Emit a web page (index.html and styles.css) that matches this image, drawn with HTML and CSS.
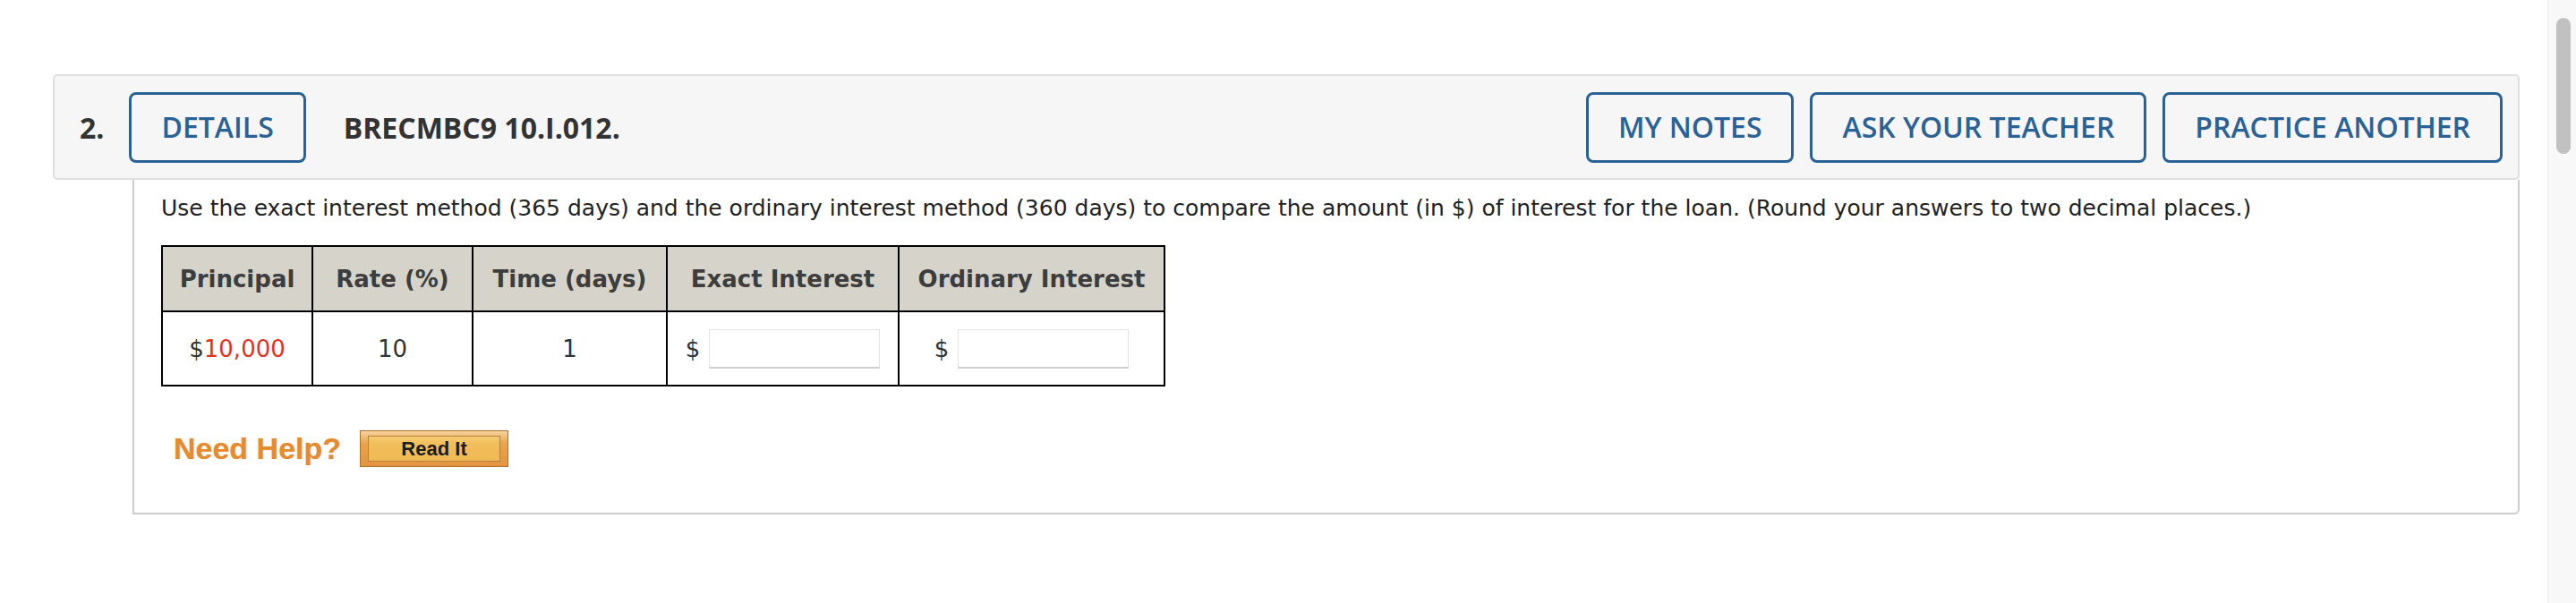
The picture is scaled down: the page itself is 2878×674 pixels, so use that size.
FILE: index.html
```html
<!DOCTYPE html>
<html lang="en">
<head>
<meta charset="utf-8">
<title>Question 2</title>
<link rel="stylesheet" href="styles.css">
</head>
<body>
<div class="page">
  <main class="main">
    <section class="question">
      <header class="q-head">
        <span class="q-num">2.</span>
        <button class="btn btn-details" type="button">DETAILS</button>
        <span class="q-code">BRECMBC9 10.I.012.</span>
        <div class="q-actions">
          <button class="btn" type="button">MY NOTES</button>
          <button class="btn" type="button">ASK YOUR TEACHER</button>
          <button class="btn" type="button">PRACTICE ANOTHER</button>
        </div>
      </header>
      <div class="q-body">
        <p class="prompt">Use the exact interest method (365 days) and the ordinary interest method (360 days) to compare the amount (in $) of interest for the loan. (Round your answers to two decimal places.)</p>
        <table class="grid">
          <colgroup>
            <col class="c1"><col class="c2"><col class="c3"><col class="c4"><col class="c5">
          </colgroup>
          <thead>
            <tr>
              <th>Principal</th>
              <th>Rate (%)</th>
              <th>Time (days)</th>
              <th>Exact Interest</th>
              <th>Ordinary Interest</th>
            </tr>
          </thead>
          <tbody>
            <tr>
              <td>$<span class="given">10,000</span></td>
              <td>10</td>
              <td>1</td>
              <td><span class="ans">$<input type="text" aria-label="Exact interest"></span></td>
              <td><span class="ans">$<input type="text" aria-label="Ordinary interest"></span></td>
            </tr>
          </tbody>
        </table>
        <div class="help">
          <span class="need">Need Help?</span>
          <span class="readit"><span class="readit-inner">Read It</span></span>
        </div>
      </div>
    </section>
  </main>
  <div class="scrollbar"><div class="thumb"></div></div>
</div>
</body>
</html>
```

FILE: styles.css
```css
* { box-sizing: border-box; }

html, body {
  margin: 0;
  padding: 0;
  overflow: hidden;
  background: #fff;
}

.page {
  display: flex;
  height: 674px;
}

.main {
  flex: 1;
  padding: 83px 31px 0 59px;
}

/* ---------- header bar ---------- */
.q-head {
  display: flex;
  align-items: center;
  height: 118px;
  padding: 0 17px 0 28px;
  background: #f6f6f6;
  border: 2px solid #dfdfdf;
  border-radius: 5px;
  font-family: "Open Sans", "DejaVu Sans", sans-serif;
}

.q-num {
  font-size: 32px;
  font-weight: 700;
  color: #333;
}

.btn {
  font-family: inherit;
  font-size: 32px;
  font-weight: 600;
  line-height: 1;
  color: #2b6296;
  background: transparent;
  border: 3px solid #2b6296;
  border-radius: 8px;
  height: 79px;
  padding: 0 33px;
  margin: 0;
}

.btn-details { margin-left: 28px; }

.q-code {
  margin-left: 42px;
  font-size: 32px;
  font-weight: 700;
  color: #333;
}

.q-actions {
  margin-left: auto;
  display: flex;
  gap: 18px;
}

/* ---------- body ---------- */
.q-body {
  margin-left: 89px;
  border: 2px solid #cdcdcd;
  border-top: 0;
  border-radius: 0 0 6px 0;
  padding: 18px 30px 51px 30px;
}

.prompt {
  margin: 0;
  font-family: "DejaVu Sans", Verdana, sans-serif;
  font-size: 25px;
  line-height: 28px;
  color: #222;
}

.grid {
  margin-top: 27px;
  border-collapse: collapse;
  table-layout: fixed;
  width: 1120px;
  font-family: "DejaVu Sans", Verdana, sans-serif;
  font-size: 26px;
  color: #333;
}

.c1 { width: 168px; }
.c2 { width: 179px; }
.c3 { width: 217px; }
.c4 { width: 259px; }
.c5 { width: 297px; }

.grid th,
.grid td {
  border: 2px solid #000;
  text-align: center;
  padding: 0;
}

.grid th {
  height: 73px;
  background: #d6d3ca;
  font-weight: 700;
  color: #3d3d3d;
}

.grid td { height: 83px; }

.given { color: #e3311f; }

.ans {
  display: inline-flex;
  align-items: center;
}

.ans input {
  width: 191px;
  height: 44px;
  margin: 0 0 0 10px;
  padding: 0;
  border: 1px solid #e3e3e3;
  border-bottom: 2px solid #cfcfcf;
  background: #fff;
  font: inherit;
}

/* ---------- help ---------- */
.help {
  display: flex;
  align-items: center;
  margin-top: 49px;
  margin-left: 14px;
}

.need {
  font-family: "Liberation Sans", Arial, sans-serif;
  font-weight: 700;
  font-size: 34px;
  color: #e58b30;
  text-shadow: 0 0 1px rgba(229, 139, 48, 0.6);
}

.readit {
  display: block;
  margin-left: 21px;
  width: 166px;
  height: 41px;
  padding: 5px 8px 5px 8px;
  border: 1px solid #a8732f;
  background: linear-gradient(#f6d39c 0%, #eaa34c 35%, #e4953f 100%);
}

.readit-inner {
  display: flex;
  align-items: center;
  justify-content: center;
  height: 100%;
  border: 1px solid #b6823f;
  background: linear-gradient(#f5cc74 0%, #f2be5b 30%, #f0b953 100%);
  font-family: "Liberation Sans", Arial, sans-serif;
  font-weight: 700;
  font-size: 22px;
  color: #1c1c1c;
}

/* ---------- scrollbar ---------- */
.scrollbar {
  flex: none;
  width: 32px;
  background: #f8f8f8;
  border-left: 1px solid #ececec;
  padding: 20px 0 0 9px;
}

.thumb {
  width: 16px;
  height: 152px;
  border-radius: 8px;
  background: #c1c1c1;
}
```
